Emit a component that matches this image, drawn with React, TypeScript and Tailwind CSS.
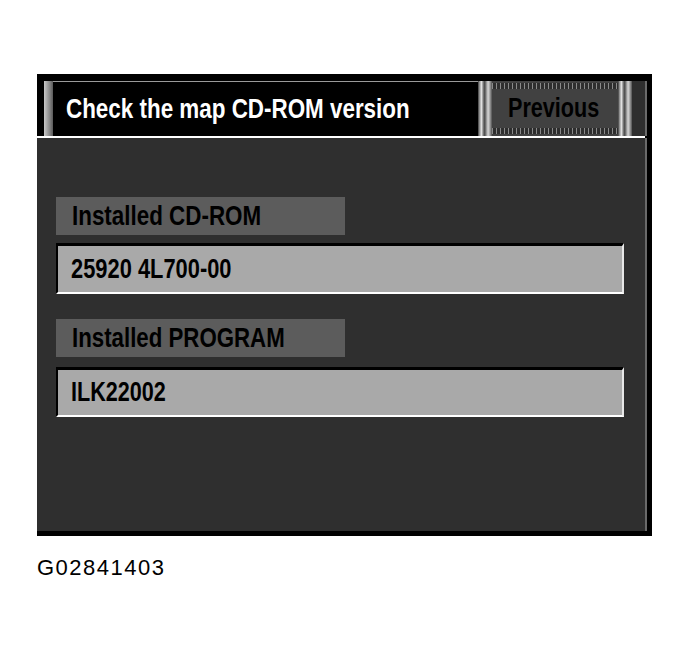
import React from "react";

const sans = { fontFamily: '"Liberation Sans", Arial, Helvetica, sans-serif' };

function Stripes() {
  return (
    <div className="w-[14px] h-full bg-[linear-gradient(90deg,#3a3a3a_0%,#9a9a9a_12%,#e0e0e0_25%,#7a7a7a_38%,#4a4a4a_48%,#8a8a8a_58%,#d8d8d8_72%,#a0a0a0_85%,#505050_100%)]" />
  );
}

function Ticks() {
  return <div className="h-[6px] w-full bg-[repeating-linear-gradient(90deg,#8a8a8a_0px,#8a8a8a_1px,#2e2e2e_1px,#2e2e2e_4px)]" />;
}

function Cond({ children, className }: { children: React.ReactNode; className: string }) {
  return (
    <span className={"inline-block whitespace-nowrap origin-left font-bold leading-none " + className} style={sans}>
      {children}
    </span>
  );
}

export default function App() {
  return (
    <div className="w-[689px] h-[655px] bg-white relative overflow-hidden">
      <div className="pt-[74px] pl-[37px]">
        <div className="w-[615px] h-[462px] bg-black flex flex-col">
          <div className="h-[7px] bg-black" />
          <div className="h-[55px] flex">
            <div className="w-[7px] bg-black" />
            <div className="w-[9px] bg-[linear-gradient(90deg,#c8c8c8,#8a8a8a_60%,#5a5a5a)]" />
            <div className="w-[425px] bg-black border-t border-[#9a9a9a] flex items-center pl-[13px] overflow-hidden">
              <Cond className="text-white text-[27px] scale-x-[0.83]">Check the map CD-ROM version</Cond>
            </div>
            <Stripes />
            <div className="w-[126px] bg-[#414141] flex flex-col justify-between py-[2px]">
              <Ticks />
              <div className="flex-1 flex items-center pl-[16px] overflow-hidden">
                <Cond className="text-black text-[27px] scale-x-[0.8]">Previous</Cond>
              </div>
              <Ticks />
            </div>
            <Stripes />
            <div className="flex-1 flex bg-[#2e2e2e]">
              <div className="flex-1" />
              <div className="w-[2px] bg-[#6a6a6a]" />
              <div className="w-[5px] bg-black" />
            </div>
          </div>
          <div className="h-[2px] flex">
            <div className="w-[608px] bg-white" />
            <div className="flex-1 bg-black" />
          </div>
          <div className="flex-1 flex">
            <div className="flex-1 bg-[#2f2f2f] flex flex-col pt-[59px] pl-[19px]">
              <div className="w-[289px] h-[38px] bg-[#5c5c5c] flex items-center pl-[16px] overflow-hidden">
                <Cond className="text-black text-[28px] scale-x-[0.8]">Installed CD-ROM</Cond>
              </div>
              <div className="mt-[8px] w-[568px] border-t-[3px] border-l-2 border-black border-b-2 border-b-white border-r-2 border-r-[#e8e8e8] bg-[#a9a9a9] h-[51px] flex items-center pl-[13px] overflow-hidden">
                <Cond className="text-black text-[27px] scale-x-[0.81]">25920 4L700-00</Cond>
              </div>
              <div className="mt-[25px] w-[289px] h-[38px] bg-[#5c5c5c] flex items-center pl-[16px] overflow-hidden">
                <Cond className="text-black text-[28px] scale-x-[0.795]">Installed PROGRAM</Cond>
              </div>
              <div className="mt-[10px] w-[568px] border-t-[3px] border-l-2 border-black border-b-2 border-b-white border-r-2 border-r-[#e8e8e8] bg-[#a9a9a9] h-[50px] flex items-center pl-[13px] overflow-hidden">
                <Cond className="text-black text-[27px] scale-x-[0.8]">ILK22002</Cond>
              </div>
            </div>
            <div className="w-[2px] bg-[#6a6a6a]" />
            <div className="w-[5px] bg-black" />
          </div>
          <div className="h-[5px] bg-black" />
        </div>
      </div>
      <div className="pl-[37px] pt-[21px]">
        <span className="text-black text-[22px] leading-none tracking-[1.5px]" style={sans}>
          G02841403
        </span>
      </div>
    </div>
  );
}
